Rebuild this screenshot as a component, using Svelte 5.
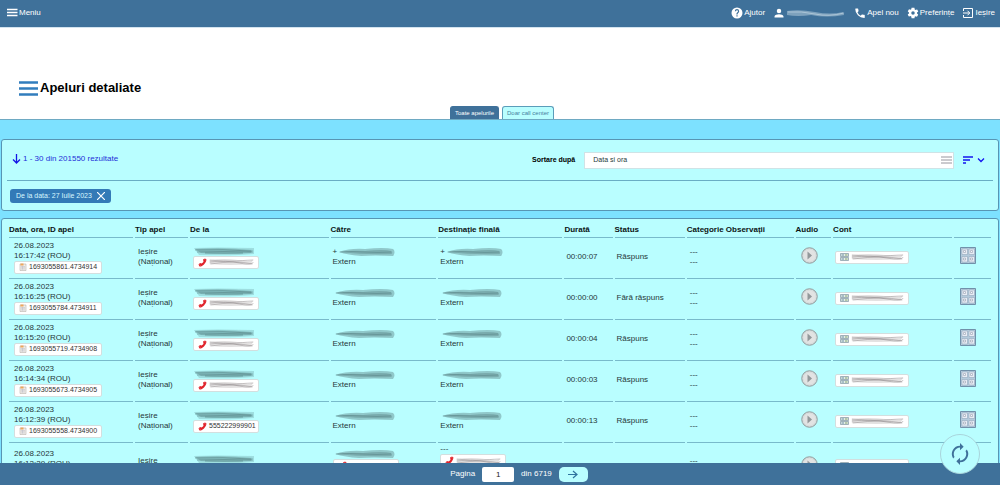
<script>
  const columns = [
    { key: 'date', label: 'Data, ora, ID apel' },
    { key: 'type', label: 'Tip apel' },
    { key: 'from', label: 'De la' },
    { key: 'to', label: 'Către' },
    { key: 'dest', label: 'Destinație finală' },
    { key: 'duration', label: 'Durată' },
    { key: 'status', label: 'Status' },
    { key: 'category', label: 'Categorie Observații' },
    { key: 'audio', label: 'Audio' },
    { key: 'account', label: 'Cont' },
    { key: 'more', label: '' }
  ];

  const calls = [
    { time: '16:17:42', id: '1693055861.4734914', duration: '00:00:07', status: 'Răspuns', plus: true },
    { time: '16:16:25', id: '1693055784.4734911', duration: '00:00:00', status: 'Fără răspuns' },
    { time: '16:15:20', id: '1693055719.4734908', duration: '00:00:04', status: 'Răspuns' },
    { time: '16:14:34', id: '1693055673.4734905', duration: '00:00:03', status: 'Răspuns' },
    { time: '16:12:39', id: '1693055558.4734900', duration: '00:00:13', status: 'Răspuns', number: '555222999901' },
    { time: '16:12:29', id: '1693055549.4734897', duration: '00:01:48', status: 'Răspuns', transferred: true }
  ];

  let tab = $state('all');
  let sortBy = $state('date');
  let page = $state('1');
  let filters = $state(['De la data: 27 Iulie 2023']);

  function removeFilter(filter) {
    filters = filters.filter(f => f !== filter);
  }
</script>

<!-- Hidden phone numbers and names -->
{#snippet smudge(kind)}
  <svg class="smudge {kind}" viewBox="0 0 62 10" preserveAspectRatio="none" aria-hidden="true">
    {#if kind === 'bar'}
      <path d="M1 2 Q20 1 61 2 L61 8 Q40 10 6 9 Z" fill="#5f9698" opacity=".3" />
      <path d="M2 3 Q30 1 60 4 L58 7 Q30 9 8 7 Z" fill="#4f8385" opacity=".35" />
      <path d="M2 4 Q30 3 58 5 M4 6 Q30 5 60 6 M12 7 H50" stroke="#3f6466" stroke-width="1" fill="none" opacity=".4" />
    {:else if kind === 'taper'}
      <path d="M2 5 Q14 1 30 2 Q50 0 60 2 Q63 5 60 9 Q40 8 26 9 Q12 8 2 5Z" fill="#7fb0b3" opacity=".7" />
      <path d="M3 5 Q14 3 30 4 Q50 2 58 4 Q60 6 58 7 Q30 8 3 5Z" fill="#648f92" opacity=".5" />
      <path d="M3 5 Q16 4 30 5 T58 5" stroke="#477174" stroke-width="1" fill="none" opacity=".35" />
    {:else if kind === 'user'}
      <path d="M1 3 Q14 1 30 4 T59 4 L60 7 Q42 10 26 7 Q12 9 1 7Z" fill="#a9c3d6" opacity=".6" />
      <path d="M2 4 Q16 3 30 6 T60 5" stroke="#dbe8f0" fill="none" opacity=".5" />
    {:else}
      <path d="M1 3 Q20 1 40 3 T61 2 L58 7 Q30 9 1 7Z" fill="#b9b4b5" opacity=".4" />
      <path d="M1 3 Q20 5 38 4 T61 3 M1 5 Q24 3 42 6 T61 5 M2 7 Q20 5 34 5 T60 7" stroke="#888183" fill="none" opacity=".5" />
    {/if}
  </svg>
{/snippet}

{#snippet phoneChip(number)}
  <a class="chip phone" href="#apel">
    <svg width="9" height="9" viewBox="0 0 18 18" aria-hidden="true">
      <path d="M3 17 C8 18 16 11 17 3 L14 1 L10 3 L11 7 C10 9 9 10 7 11 L4 10 L1 13 Z" fill="#e0242c" />
      <path d="M13 3 L15 4 M3 13 L5 15" stroke="#f9a2a2" stroke-width="1" />
    </svg>
    {#if number}<span>{number}</span>{:else}{@render smudge('lines')}{/if}
  </a>
{/snippet}

<div class="app">
  <nav>
    <a href="#meniu">
      <svg width="11" height="9" viewBox="0 0 11 9" aria-hidden="true"><path d="M0 1.5H10.500M0 4.500H10.500M0 7.500H10.500" stroke="#fff" stroke-width="1.300" /></svg>
      Meniu
    </a>
    <div class="right">
      <a href="#ajutor">
        <svg width="12" height="12" viewBox="0 0 24 24" fill="#fff" aria-hidden="true"><path d="M12 1a11 11 0 1 0 0 22a11 11 0 0 0 0-22zm1.200 18h-2.400v-2.400h2.400zm2.200-8.200l-1 1c-.9.900-1.300 1.500-1.300 3h-2.300v-.6c0-1.200.5-2.200 1.300-3l1.300-1.300c.4-.4.600-.9.600-1.400a2 2 0 0 0-4 0H7.700a4.300 4.300 0 0 1 8.600 0c0 .9-.4 1.700-.9 2.300z" /></svg>
        Ajutor
      </a>
      <a href="#cont" aria-label="Cont">
        <svg width="12" height="12" viewBox="0 0 24 24" fill="#fff" aria-hidden="true"><path d="M12 12.500a4.500 4.500 0 1 0 0-9a4.500 4.500 0 0 0 0 9zm0 2c-3.500 0-9 1.500-9 4.500V21h18v-2c0-3-5.500-4.500-9-4.500z" /></svg>
        {@render smudge('user')}
      </a>
      <a href="#apel-nou">
        <svg width="12" height="12" viewBox="0 0 24 24" fill="#fff" aria-hidden="true"><path d="M7 10.800a15 15 0 0 0 6.500 6.500l2.200-2.200c.3-.3.700-.4 1-.2 1.200.4 2.400.6 3.800.6.600 0 1 .4 1 1V21c0 .6-.4 1-1 1A18 18 0 0 1 2.500 4c0-.6.400-1 1-1H7.500c.6 0 1 .4 1 1 0 1.200.2 2.500.6 3.600.1.300 0 .7-.2 1z" /></svg>
        Apel nou
      </a>
      <a href="#preferinte">
        <svg width="12" height="12" viewBox="0 0 24 24" fill="#fff" aria-hidden="true"><path d="M20 13l.1-1-.1-1 2.200-1.700c.2-.2.300-.5.100-.7l-2-3.600c-.1-.2-.4-.3-.6-.2l-2.600 1a8 8 0 0 0-1.700-1L15 2c0-.2-.2-.4-.5-.4h-5c-.3 0-.5.200-.5.400l-.4 2.700a8 8 0 0 0-1.700 1l-2.600-1c-.2-.1-.5 0-.6.200l-2 3.600c-.1.200-.1.500.1.700L4 11l-.1 1 .1 1-2.200 1.700c-.2.200-.2.500-.1.700l2 3.600c.1.200.4.300.6.200l2.600-1c.5.400 1.100.7 1.700 1L9 22c0 .2.200.4.500.4h5c.3 0 .5-.2.500-.4l.4-2.700c.6-.3 1.200-.6 1.700-1l2.600 1c.2.100.5 0 .6-.2l2-3.600c.1-.2.1-.5-.1-.7zM12 15.500a3.500 3.500 0 1 1 0-7a3.500 3.500 0 0 1 0 7z" /></svg>
        Preferințe
      </a>
      <a href="#iesire">
        <svg width="12" height="12" viewBox="0 0 24 24" fill="none" stroke="#fff" stroke-width="2" aria-hidden="true"><path d="M3 8V3H21V21H3V16M2 12H15M11 7.500L15.500 12L11 16.500" /></svg>
        Ieșire
      </a>
    </div>
  </nav>

  <header>
    <h1>
      <svg width="19" height="15" viewBox="0 0 19 15" aria-hidden="true"><path d="M0 1.500H19M0 7.500H19M0 13.500H19" stroke="#327dbd" stroke-width="2.600" /></svg>
      Apeluri detaliate
    </h1>
    <div class="tabs">
      <button class:active={tab === 'all'} onclick={() => (tab = 'all')}>Toate apelurile</button>
      <button class:active={tab === 'cc'} onclick={() => (tab = 'cc')}>Doar call center</button>
    </div>
  </header>

  <main>
    <section class="panel filters">
      <div class="toolbar">
        <a class="results" href="#rezultate">
          <svg width="9" height="10" viewBox="0 0 9 10" fill="none" stroke="#1414e6" stroke-width="1.300" aria-hidden="true"><path d="M4.500 0V9M1 5.500L4.500 9L8 5.500" /></svg>
          1 - 30 din 201550 rezultate
        </a>
        <label for="sort">Sortare după</label>
        <div class="select">
          <select id="sort" bind:value={sortBy}>
            <option value="date">Data si ora</option>
            <option value="duration">Durată</option>
          </select>
          <svg width="11" height="8" viewBox="0 0 11 8" aria-hidden="true"><path d="M0 1H11M0 4H11M0 7H11" stroke="#96969e" /></svg>
        </div>
        <button class="order" aria-label="Ordine">
          <svg width="22" height="8" viewBox="0 0 22 8" fill="none" stroke="#1414f0" stroke-width="1.300" aria-hidden="true"><path d="M0 1H10M0 4H7M0 7H3M15 2.500L18 5.500L21 2.500" /></svg>
        </button>
      </div>
      <div class="applied">
        {#each filters as filter (filter)}
          <button class="filter" onclick={() => removeFilter(filter)}>
            {filter}
            <svg width="8" height="8" viewBox="0 0 8 8" aria-hidden="true"><path d="M0 0L8 8M8 0L0 8" stroke="#fff" stroke-width="1.200" /></svg>
          </button>
        {/each}
      </div>
    </section>

    <section class="panel">
      <table>
        <thead>
          <tr>
            {#each columns as col (col.key)}
              <th class={col.key}>{col.label}</th>
            {/each}
          </tr>
        </thead>
        <tbody>
          {#each calls as call (call.id)}
            <tr class:tall={call.transferred}>
              <td class="date">
                26.08.2023<br />{call.time} (ROU)
                <a class="chip" href="#apel">
                  <svg width="8" height="8" viewBox="0 0 16 16" aria-hidden="true">
                    <path d="M2 2H14V15H2Z" fill="#f2eee9" stroke="#aaa5a0" />
                    <path d="M4 7H12M4 9.500H12M4 12H12M7 6V13" stroke="#b9b9c4" />
                    <path d="M3 1H9V5H3Z" fill="#eda75c" />
                  </svg>
                  <span>{call.id}</span>
                </a>
              </td>
              <td class="type">Ieșire<br />(Național)</td>
              <td class="from">
                {@render smudge('bar')}
                {@render phoneChip(call.number)}
              </td>
              <td class="to">
                <div class="hidden-number">{#if call.plus}<span>+</span>{/if}{@render smudge('taper')}</div>
                {#if call.transferred}{@render phoneChip()}{/if}
                Extern
              </td>
              <td class="dest">
                {#if call.transferred}
                  ---
                  {@render phoneChip()}
                  {@render smudge('taper')}
                {:else}
                  <div class="hidden-number">{#if call.plus}<span>+</span>{/if}{@render smudge('taper')}</div>
                {/if}
                Extern
              </td>
              <td class="duration">{call.duration}</td>
              <td class="status">{call.status}</td>
              <td class="category">---<br />---</td>
              <td class="audio">
                <button aria-label="Redă">
                  <svg width="17" height="17" viewBox="0 0 34 34" aria-hidden="true">
                    <circle cx="17" cy="17" r="15.500" fill="#d6dcdc" stroke="#909b9d" stroke-width="2" />
                    <circle cx="17" cy="17" r="12" fill="#e2e3e3" />
                    <path d="M13 9L22 17L13 25Z" fill="#91989a" />
                  </svg>
                </button>
              </td>
              <td class="account">
                <a class="chip" href="#cont">
                  <svg width="9" height="8" viewBox="0 0 18 16" aria-hidden="true">
                    <path d="M1 1H17V7H1ZM1 9H17V15H1Z" fill="#e3ede6" stroke="#849aa6" stroke-width="1.500" />
                    <path d="M3 4H8M3 12H8" stroke="#6f8fa8" stroke-width="2" />
                    <path d="M10 4H15M10 12H15" stroke="#86a472" stroke-width="2" />
                  </svg>
                  {@render smudge('lines')}
                </a>
              </td>
              <td class="more">
                <button aria-label="Detalii">
                  <svg width="16" height="17" viewBox="0 0 32 34" aria-hidden="true">
                    <path d="M1 1H31V33H1Z" fill="#b4cbdc" stroke="#7191aa" stroke-width="2" />
                    <path d="M4 4H15V15H4ZM18 4H29V15H18ZM4 19H15V30H4ZM18 19H29V30H18Z" fill="#e8ecf4" stroke="#8b9fb5" />
                    <path d="M7 7H11V11H7ZM21 7H25V11H21ZM7 22H11V26H7ZM21 22H25V26H21Z" fill="#f8f8fa" stroke="#a5adbd" stroke-width="1.500" />
                  </svg>
                </button>
              </td>
            </tr>
          {/each}
        </tbody>
      </table>
    </section>
  </main>

  <footer>
    <label for="page">Pagina</label>
    <input id="page" bind:value={page} />
    <span>din 6719</span>
    <button class="next" aria-label="Pagina următoare">
      <svg width="10" height="9" viewBox="0 0 10 9" fill="none" stroke="#2f739f" stroke-width="1.200" aria-hidden="true"><path d="M0 4.500H9M5 1L9 4.500L5 8" /></svg>
    </button>
    <button class="refresh" aria-label="Reîncarcă">
      <svg width="22" height="22" viewBox="0 0 24 24" fill="#3f719a" aria-hidden="true">
        <path d="M12 5v3l4-4-4-4v3a9 9 0 0 0-7.500 13.800l1.500-1.500A7 7 0 0 1 12 5zm7.500 2.200L18 8.700A7 7 0 0 1 12 19v-3l-4 4 4 4v-3a9 9 0 0 0 7.500-13.800z" />
      </svg>
    </button>
  </footer>
</div>

<style>
:global(body) { margin: 0; }

.app {
  display: flex;
  flex-direction: column;
  height: 100vh;
  background: #7de1ff;
  color: #26383a;
  font: 8px/10px 'Liberation Sans', Arial, sans-serif;
}

a { color: inherit; text-decoration: none; }
button, input, select { font: inherit; color: inherit; margin: 0; padding: 0; border: 0; background: none; }
button { cursor: pointer; }
svg { display: block; flex: none; }

nav {
  display: flex;
  justify-content: space-between;
  flex: none;
  height: 27px;
  padding: 0 5px 2px 7px;
  box-sizing: border-box;
  background: #3f719a;
  color: #fff;
}
nav a { display: flex; align-items: center; gap: 1px; }
.right { display: flex; gap: 8px; }

header { flex: none; background: #fff; border-top: 1px solid #d3e3ef; border-bottom: 1px solid #6eaac3; }
h1 {
  display: flex;
  align-items: center;
  gap: 2px;
  margin: 51px 19px 9px;
  color: #000;
  font-size: 13px;
  line-height: 18px;
}
.tabs { display: flex; justify-content: center; gap: 3px; padding-left: 4px; }
.tabs button {
  height: 13px;
  padding: 0 4px;
  border: 1px solid #5b9dba;
  border-bottom: 0;
  border-radius: 3px 3px 0 0;
  background: #b9feff;
  color: #4681a0;
  font-size: 6px;
}
.tabs button.active { background: #3f719a; border-color: #3f719a; color: #fff; }

main { flex: 1; min-height: 0; padding: 19px 1px 0; overflow-y: auto; scrollbar-width: none; }
.panel { margin-bottom: 7px; padding: 0 5px; border: 1px solid #5795b4; border-radius: 3px; background: #b9feff; }

.toolbar { display: flex; align-items: center; height: 40px; padding: 0 8px 0 5px; border-bottom: 1px solid #69adc4; }
.results { display: flex; align-items: center; gap: 2px; margin: 0 auto 3px 0; color: #1f2fd8; }
.toolbar label { margin-right: 9px; color: #000; font-size: 7px; font-weight: bold; }
.select { position: relative; width: 38%; }
.select select {
  display: block;
  width: 100%;
  height: 17px;
  padding: 0 8px;
  border: 1px solid #cfe3e6;
  background: #fff;
  font-size: 7px;
  appearance: none;
}
.select svg { position: absolute; right: 2px; top: 4px; pointer-events: none; }
.order { margin-left: 9px; }

.applied { display: flex; align-items: center; height: 29px; padding-left: 3px; }
.filter {
  display: flex;
  align-items: center;
  gap: 5px;
  height: 14px;
  padding: 0 6px;
  border-radius: 3px;
  background: #337ab7;
  color: #d8f8ff;
  font-size: 7px;
}

table { width: 100%; table-layout: fixed; border-collapse: separate; border-spacing: 2px 0; }
th, td { box-sizing: border-box; border-bottom: 1px solid #78bacb; text-align: left; white-space: nowrap; }
th { height: 19px; padding: 4px 0 0; color: #0c1414; }
td { height: 41px; padding: 0 0 2px 2px; vertical-align: middle; }
.tall td { height: 48px; }
th.date { width: 12.9%; }
th.type { width: 5.5%; }
th.from { width: 14.4%; }
th.to { width: 11%; }
th.dest { width: 12.9%; }
th.duration { width: 5%; }
th.status { width: 7.3%; }
th.category { width: 11.1%; }
th.audio { width: 3.7%; }
th.account { width: 12.4%; }
th.more { width: 3.8%; }
td.date { padding-left: 5px; }
td.type, td.from, td.category { padding-left: 3px; }
td.audio { padding-left: 5px; }
td.more { padding-left: 6px; }

.chip {
  display: flex;
  align-items: center;
  gap: 2px;
  width: fit-content;
  height: 13px;
  padding: 0 4px;
  box-sizing: border-box;
  border: 1px solid #d3dfdf;
  border-radius: 2px;
  background: #fff;
  color: #333;
  font-size: 7px;
}
.phone { width: 66px; }
.account .chip { width: 74px; }
.chip .smudge { flex: 1; min-width: 0; }

.smudge { width: 62px; height: 10px; }
.smudge.user { width: 60px; }
.hidden-number { display: flex; align-items: center; }
.hidden-number span + .smudge { width: 58px; }

footer {
  position: relative;
  display: flex;
  justify-content: center;
  align-items: center;
  gap: 7px;
  flex: none;
  height: 22px;
  padding-left: 38px;
  background: #3f719a;
  color: #fff;
}
footer input { width: 32px; height: 15px; border-radius: 2px; background: #fff; color: #222; text-align: center; box-sizing: border-box; }
.next { display: grid; place-items: center; width: 29px; height: 15px; border-radius: 5px; background: #b9feff; }
.refresh {
  position: absolute;
  right: 20px;
  bottom: 11px;
  display: grid;
  place-items: center;
  width: 40px;
  height: 40px;
  border: 1px solid #a9d5dc;
  border-radius: 50%;
  background: #b9feff;
}
</style>
